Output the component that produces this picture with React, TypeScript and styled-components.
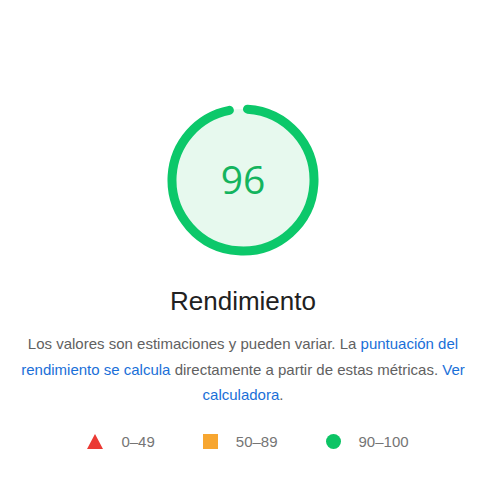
import React from "react";
import styled, { createGlobalStyle } from "styled-components";

const Global = createGlobalStyle`
  html, body { margin: 0; padding: 0; background: #fff; }
  body { font-family: "Liberation Sans", Arial, sans-serif; }
`;

const Page = styled.div`
  width: 486px;
  height: 500px;
  display: flex;
  flex-direction: column;
  align-items: center;
  padding-top: 104px;
  box-sizing: border-box;
`;

const Gauge = styled.div`
  position: relative;
  width: 152px;
  height: 152px;
`;

const GaugeNumber = styled.div`
  position: absolute;
  inset: 0;
  display: flex;
  align-items: center;
  justify-content: center;
  font-size: 39px;
  color: #14b45e;
  font-family: "Open Sans", "Liberation Sans", sans-serif;
  padding-bottom: 4px;
`;

const Title = styled.h2`
  margin: 29px 0 0;
  font-size: 26px;
  font-weight: 400;
  color: #212121;
  line-height: 32px;
`;

const Description = styled.p`
  margin: 14px 0 0;
  padding: 0 14px;
  font-size: 15px;
  line-height: 25.5px;
  color: #616161;
  text-align: center;
`;

const Link = styled.a`
  color: #1a6fd8;
  text-decoration: none;
`;

const Legend = styled.div`
  display: flex;
  align-items: center;
  gap: 48px;
  margin-top: 25px;
  margin-left: 10px;
`;

const LegendItem = styled.div`
  display: flex;
  align-items: center;
  gap: 18px;
  font-size: 15px;
  color: #757575;
`;

const Shape = styled.span<{ $kind: "tri" | "sq" | "circ" }>`
  display: inline-block;
  width: 15px;
  height: 15px;
  ${({ $kind }) =>
    $kind === "tri"
      ? `width: 0; height: 0; border-left: 8px solid transparent; border-right: 8px solid transparent; border-bottom: 15px solid #eb3a34;`
      : $kind === "sq"
      ? `background: #f7a630;`
      : `border-radius: 50%; background: #0cc465;`}
`;

export default function App() {
  const r = 71;
  const c = 2 * Math.PI * r;
  const sw = 9;
  const gap = 10;
  const arcLen = c - gap - sw;
  const startAngle = -90 + (360 * (sw / 2)) / c;
  return (
    <>
      <Global />
      <Page>
        <Gauge>
          <svg width="152" height="152" viewBox="0 0 152 152">
            <circle cx="76" cy="76" r={r} fill="#e7f9ee" />
            <circle
              cx="76"
              cy="76"
              r={r}
              fill="none"
              stroke="#0cc86a"
              strokeWidth={sw}
              strokeLinecap="round"
              strokeDasharray={`${arcLen} ${c}`}
              transform={`rotate(${startAngle} 76 76)`}
            />
          </svg>
          <GaugeNumber>96</GaugeNumber>
        </Gauge>
        <Title>Rendimiento</Title>
        <Description>
          Los valores son estimaciones y pueden variar. La{" "}
          <Link href="#">puntuación del rendimiento se calcula</Link> directamente a partir de
          estas métricas. <Link href="#">Ver calculadora</Link>.
        </Description>
        <Legend>
          <LegendItem>
            <Shape $kind="tri" />
            0–49
          </LegendItem>
          <LegendItem>
            <Shape $kind="sq" />
            50–89
          </LegendItem>
          <LegendItem>
            <Shape $kind="circ" />
            90–100
          </LegendItem>
        </Legend>
      </Page>
    </>
  );
}
